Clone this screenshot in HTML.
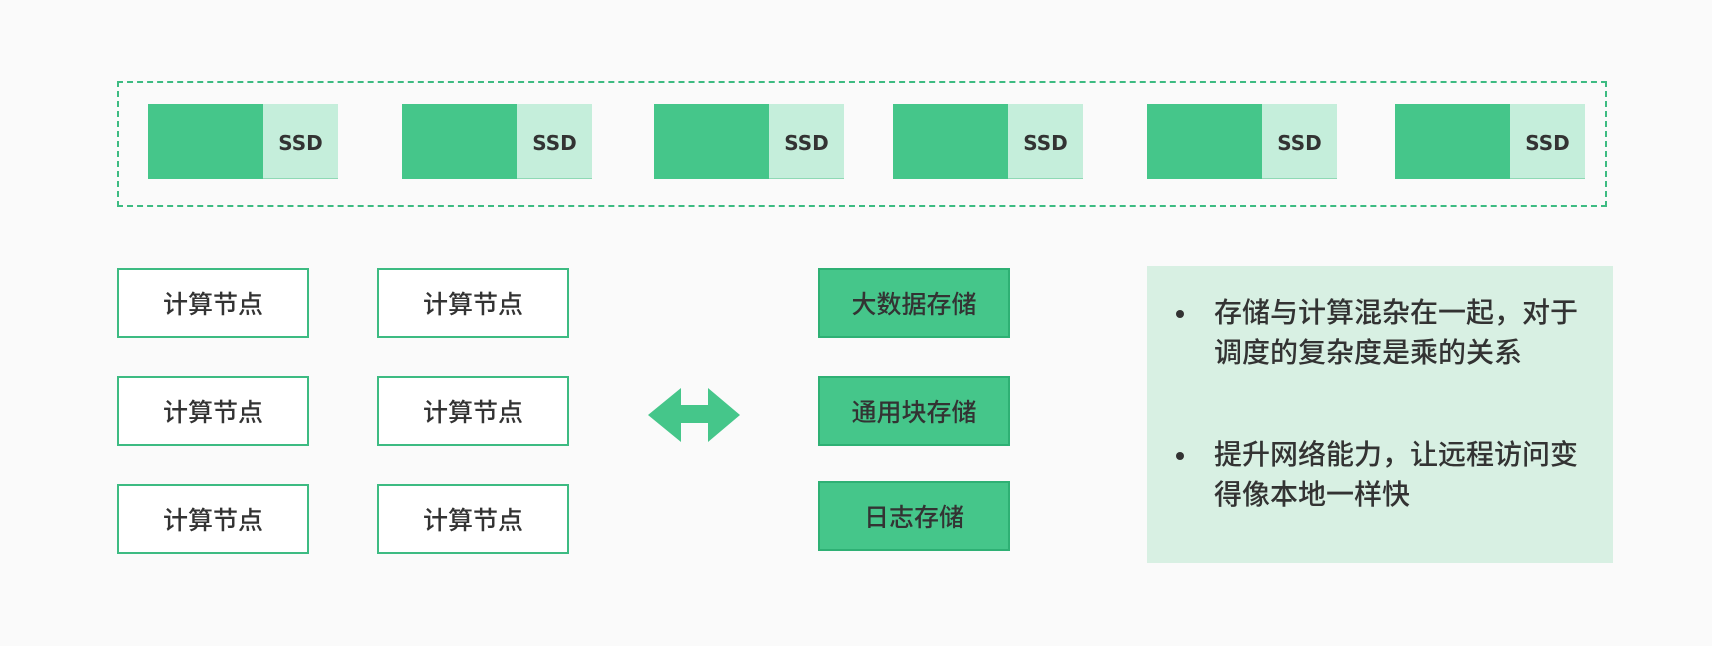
<!DOCTYPE html>
<html><head><meta charset="utf-8"><style>
body{margin:0;width:1712px;height:646px;background:#fafafa;position:relative;overflow:hidden;font-family:"Liberation Sans","Noto Sans CJK SC",sans-serif;color:#333}
.a{position:absolute;box-sizing:border-box}
.dash{left:117px;top:81px;width:1490px;height:126px;border:2px dashed #3dbb82}
.g{background:#45c68a;height:75px;top:104px;width:115px}
.l{background:#c5eedb;height:75px;top:104px;width:75px;font-family:"DejaVu Sans",sans-serif;font-size:20px;font-weight:bold;display:flex;align-items:center;justify-content:center;color:#333;border-bottom:1px solid #8fd9b5;padding-top:3px}
.n{width:192px;height:70px;border:2px solid #3dbb82;background:#fff;font-size:25px;display:flex;align-items:center;justify-content:center;font-weight:500}
.s{left:818px;width:192px;height:70px;border:2px solid #2eb074;background:#45c68a;font-size:25px;display:flex;align-items:center;justify-content:center;font-weight:500}
.p{left:1147px;top:266px;width:466px;height:297px;background:#d8f0e3}
.t{position:absolute;left:1214px;font-size:28px;line-height:40px;white-space:nowrap;font-weight:500}
.b{position:absolute;left:1176px;width:8px;height:8px;border-radius:50%;background:#333}
</style></head><body>
<div class="a dash"></div>
<div class="a g" style="left:148px"></div><div class="a l" style="left:263px">SSD</div>
<div class="a g" style="left:402px"></div><div class="a l" style="left:517px">SSD</div>
<div class="a g" style="left:654px"></div><div class="a l" style="left:769px">SSD</div>
<div class="a g" style="left:893px"></div><div class="a l" style="left:1008px">SSD</div>
<div class="a g" style="left:1147px"></div><div class="a l" style="left:1262px">SSD</div>
<div class="a g" style="left:1395px"></div><div class="a l" style="left:1510px">SSD</div>

<div class="a n" style="left:117px;top:268px">计算节点</div>
<div class="a n" style="left:377px;top:268px">计算节点</div>
<div class="a n" style="left:117px;top:376px">计算节点</div>
<div class="a n" style="left:377px;top:376px">计算节点</div>
<div class="a n" style="left:117px;top:484px">计算节点</div>
<div class="a n" style="left:377px;top:484px">计算节点</div>

<svg class="a" style="left:0;top:0" width="1712" height="646"><polygon points="648,415 681,388 681,405 708,405 708,388 740,415 708,442 708,423 681,423 681,442" fill="#45c68a"/></svg>

<div class="a s" style="top:268px">大数据存储</div>
<div class="a s" style="top:376px">通用块存储</div>
<div class="a s" style="top:481px">日志存储</div>

<div class="a p"></div>
<div class="b" style="top:310px"></div>
<div class="t" style="top:293px">存储与计算混杂在一起，对于<br>调度的复杂度是乘的关系</div>
<div class="b" style="top:452px"></div>
<div class="t" style="top:435px">提升网络能力，让远程访问变<br>得像本地一样快</div>
</body></html>
